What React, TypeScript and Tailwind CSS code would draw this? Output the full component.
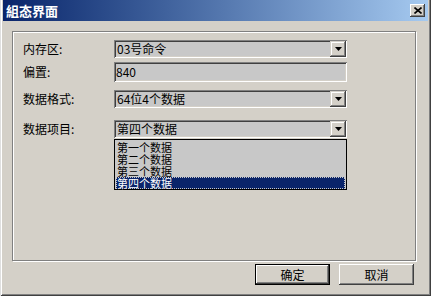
import React from "react";

const font = { fontFamily: '"Noto Sans CJK SC", "Noto Sans", sans-serif' };

function Arrow() {
  return (
    <div className="w-[16px] h-[16px] bg-[#d4d0c8] shadow-[inset_-1px_-1px_#404040,inset_1px_1px_#d4d0c8,inset_-2px_-2px_#808080,inset_2px_2px_#fff] flex items-center justify-center">
      <svg width="7" height="4" viewBox="0 0 7 4">
        <path d="M0 0h7L3.5 4z" fill="#000" />
      </svg>
    </div>
  );
}

function Combo({ value }: { value: string }) {
  return (
    <div className="w-[233px] h-[18px] bg-[#c8c8c8] shadow-[inset_1px_1px_#808080,inset_-1px_-1px_#fff,inset_2px_2px_#404040,inset_-2px_-2px_#d4d0c8] flex items-center pl-[3px] pr-[1px]">
      <span className="flex-1 text-[12px] leading-[14px] text-black">{value}</span>
      <Arrow />
    </div>
  );
}

function Row({ label, children, className }: { label: string; children: React.ReactNode; className: string }) {
  return (
    <div className={"flex items-center " + className}>
      <div className="w-[91px] text-[12px] leading-[14px] text-black">{label}</div>
      {children}
    </div>
  );
}

export default function App() {
  const items = ["第一个数据", "第二个数据", "第三个数据", "第四个数据"];
  return (
    <div style={font} className="w-[431px] h-[296px] bg-[#d4d0c8] shadow-[inset_1px_0_#dfdfdf,inset_-1px_-1px_#404040,inset_2px_0_#fff,inset_-2px_-2px_#808080] px-[3px] flex flex-col">
      <div className="h-[21px] bg-gradient-to-r from-[#0a246a] to-[#a6caf0] flex items-center justify-between pl-[3px] pr-[3px]">
        <span className="text-white font-bold text-[13px] leading-[15px]">組态界面</span>
        <div className="w-[15px] h-[13px] bg-[#d4d0c8] shadow-[inset_-1px_-1px_#404040,inset_1px_1px_#fff,inset_-2px_-2px_#808080] flex items-center justify-center">
          <svg width="8" height="7" viewBox="0 0 8 7">
            <path d="M0.5 0.5l7 6M7.5 0.5l-7 6" stroke="#000" strokeWidth="1.6" />
          </svg>
        </div>
      </div>

      <div className="mt-[10px] ml-[9px] w-[404px] h-[230px] border border-[#808080] shadow-[1px_1px_#fff,inset_1px_1px_#fff] pl-[10px]">
        <Row label="内存区:" className="mt-[8px]">
          <Combo value="03号命令" />
        </Row>
        <Row label="偏置:" className="mt-[4px]">
          <div className="w-[233px] h-[20px] bg-[#c8c8c8] shadow-[inset_1px_1px_#808080,inset_-1px_-1px_#fff,inset_2px_2px_#404040,inset_-2px_-2px_#d4d0c8] flex items-center pl-[2px] text-[12px] leading-[14px] text-black">
            840
          </div>
        </Row>
        <Row label="数据格式:" className="mt-[8px]">
          <Combo value="64位4个数据" />
        </Row>
        <Row label="数据项目:" className="mt-[12px]">
          <div className="relative">
            <Combo value="第四个数据" />
            <div className="absolute left-0 top-[19px] w-[233px] h-[51px] bg-[#c8c8c8] border border-black p-[1px] flex flex-col">
              {items.map((t, i) => (
                <div
                  key={t}
                  className={
                    i === 3
                      ? "h-[12px] bg-[#0a246a] text-white outline outline-1 outline-dotted outline-[#c8c8c8] -outline-offset-1 text-[11px] leading-[12px] pl-[1px]"
                      : "h-[12px] text-black text-[11px] leading-[12px] pl-[1px]"
                  }
                >
                  {t}
                </div>
              ))}
            </div>
          </div>
        </Row>
      </div>

      <div className="flex justify-end gap-[9px] mt-[3px] pr-[14px]">
        <button className="w-[75px] h-[21px] bg-[#d4d0c8] border border-black shadow-[inset_-1px_-1px_#404040,inset_1px_1px_#fff,inset_-2px_-2px_#808080] text-[12px] text-black">
          确定
        </button>
        <button className="w-[75px] h-[21px] bg-[#d4d0c8] shadow-[inset_-1px_-1px_#404040,inset_1px_1px_#fff,inset_-2px_-2px_#808080] text-[12px] text-black">
          取消
        </button>
      </div>
    </div>
  );
}
